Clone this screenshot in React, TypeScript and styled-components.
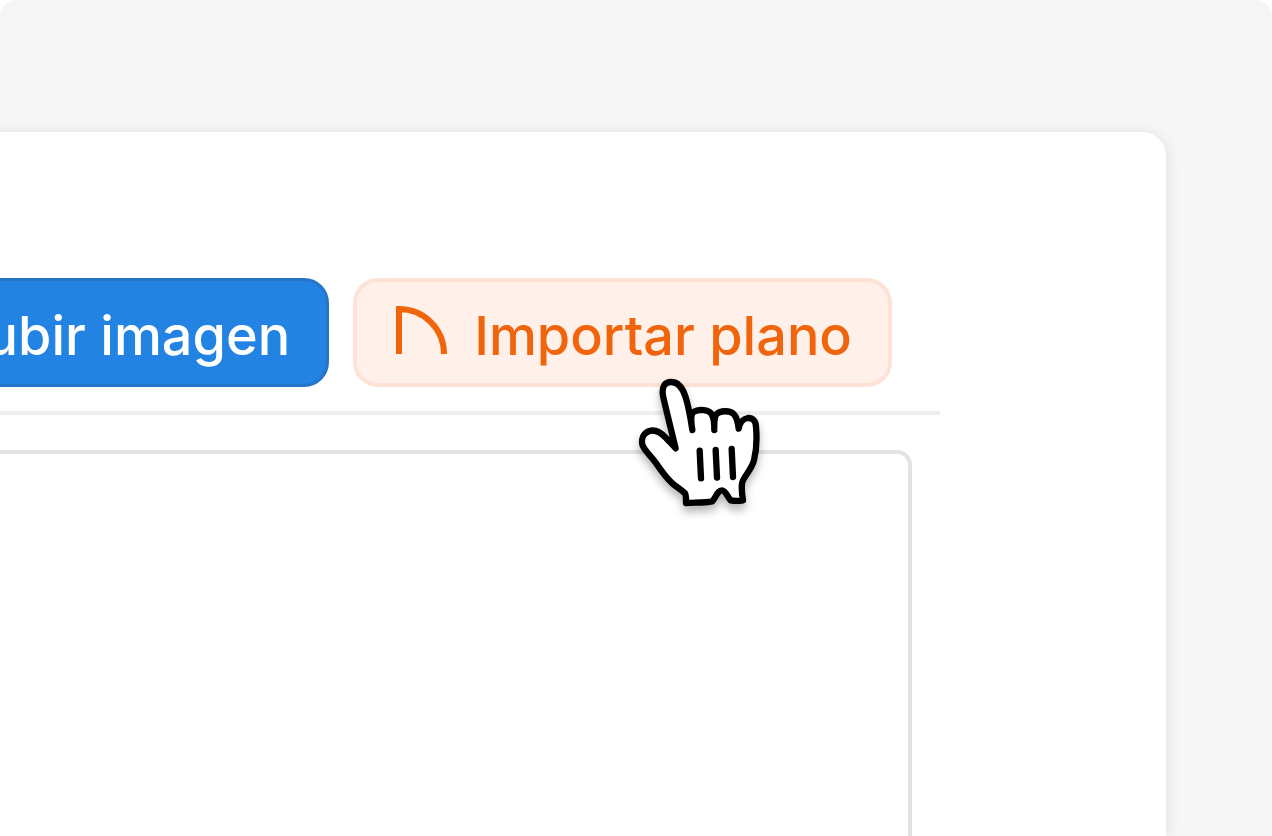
import React from "react";
import styled, { createGlobalStyle } from "styled-components";

const GlobalStyle = createGlobalStyle`
  * { box-sizing: border-box; }
  body { margin: 0; background: #ffffff; }
`;

const Page = styled.main`
  display: flex;
  min-height: 100vh;
  padding: 132px 106px 0 0;
  overflow: hidden;
  border-radius: 16px 16px 0 0;
  background: #f6f6f6;
  font-family: Inter, "Liberation Sans", sans-serif;
`;

const Card = styled.section`
  display: flex;
  flex-direction: column;
  flex: 1;
  min-width: 0;
  margin-left: -24px;
  padding: 146px 226px 0 24px;
  border-radius: 0 24px 0 0;
  background: #ffffff;
  box-shadow: 0 2px 16px rgba(0, 0, 0, 0.1);
`;

const Toolbar = styled.div`
  display: flex;
  justify-content: flex-end;
  gap: 24px;
  padding: 0 48px 24px 0;
  border-bottom: 4px solid #eeeeee;
`;

const ActionButton = styled.button<{ $primary?: boolean }>`
  position: relative;
  display: flex;
  flex: none;
  align-items: center;
  gap: 26px;
  height: 109px;
  padding: 7px 36px 0 39px;
  border: ${(p) => (p.$primary ? "3px solid #2675c9" : "4px solid #fee2d8")};
  border-radius: 25px;
  background: ${(p) => (p.$primary ? "#2383e2" : "#fff1e9")};
  color: ${(p) => (p.$primary ? "#ffffff" : "#f0640c")};
  font-family: inherit;
  font-size: 54px;
  font-weight: 500;
  line-height: 64px;
  white-space: nowrap;
  cursor: pointer;
`;

const PlanIcon = styled.svg`
  width: 52px;
  height: 60px;
  flex: none;
`;

const Pointer = styled.svg`
  position: absolute;
  top: 88px;
  right: 108px;
  width: 150px;
  height: 150px;
  overflow: visible;
  filter: drop-shadow(0 6px 4px rgba(0, 0, 0, 0.28));
  pointer-events: none;
`;

const Canvas = styled.div`
  flex: 1;
  margin: 35px 28px 0 0;
  border: solid #e2e2e2;
  border-width: 4px 4px 0 0;
  border-radius: 0 15px 0 0;
`;

export default function App() {
  return (
    <>
      <GlobalStyle />
      <Page>
        <Card>
          <Toolbar>
            <ActionButton type="button" $primary>
              Subir imagen
            </ActionButton>
            <ActionButton type="button">
              <PlanIcon viewBox="0 0 52 60" fill="none" stroke="currentColor" strokeWidth="6" aria-hidden="true">
                <path d="M3 48V3C28 3 48 23 48 48" />
              </PlanIcon>
              Importar plano
              <Pointer viewBox="0 0 450 450" fill="none" stroke="#000" strokeWidth="19" strokeLinecap="round" strokeLinejoin="round" aria-hidden="true">
                <path
                  fill="#fff"
                  d="M137 235C124 182 111 130 99 78C94 48 106 36 123 36C145 36 157 51 166 79C176 110 182 146 187 180C182 150 180 130 194 124C209 117 235 120 243 130C252 140 253 158 253 180C252 155 253 140 260 132C274 119 301 123 311 132C321 142 324 158 326 176C329 157 341 146 353 144C368 143 378 153 378 171C381 205 379 243 372 271C364 302 338 322 336 341C334 359 336 374 339 391C325 393 313 393 302 391C291 379 287 361 276 361C262 361 259 381 247 394C222 399 193 397 168 399C168 388 169 377 165 370C151 356 134 349 121 334C104 318 91 297 77 278C64 259 47 246 38 227C32 207 40 190 58 183C77 177 94 189 107 203C118 215 128 224 137 235Z"
                />
                <path d="M209 242L213 325M257 240L261 323M305 237L309 321" />
              </Pointer>
            </ActionButton>
          </Toolbar>
          <Canvas />
        </Card>
      </Page>
    </>
  );
}
